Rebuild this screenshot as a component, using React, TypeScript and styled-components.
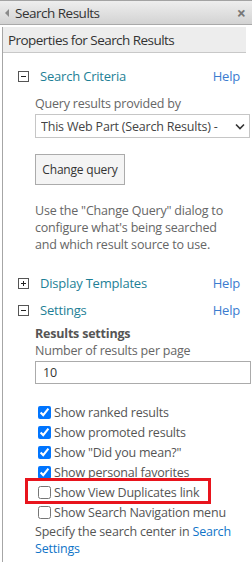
import React from "react";
import styled, { createGlobalStyle } from "styled-components";

const GlobalStyle = createGlobalStyle`
  body {
    margin: 0;
    background: #fff;
    font-family: "Open Sans", "Noto Sans", sans-serif;
    color: #444;
  }
`;

const FONT = `"Open Sans", "Noto Sans", sans-serif`;

const TitleBar = styled.div`
  display: flex;
  align-items: center;
  height: 23px;
  border-top: 1px solid #a3a3a3;
  border-bottom: 1px solid #a9a9a9;
  background: linear-gradient(#eeeeee, #d3d3d3);
  padding: 0 6px 0 5px;
  font-family: ${FONT};
  font-size: 13.5px;
  color: #333;
`;

const BackArrow = styled.span`
  width: 0;
  height: 0;
  border-top: 4px solid transparent;
  border-bottom: 4px solid transparent;
  border-right: 4px solid #8a8a8a;
  margin-right: 6px;
`;

const TitleText = styled.span`
  flex: 1;
  letter-spacing: -0.5px;
`;

const CloseIcon = styled.span`
  font-size: 16px;
  font-weight: bold;
  color: #777;
  line-height: 1;
`;

const Panel = styled.div`
  margin: 2px 0 0 2px;
  border-left: 1px solid #a6a6a6;
  min-height: 537px;
  box-sizing: border-box;
`;

const PropertiesBar = styled.div`
  width: 243px;
  height: 26px;
  display: flex;
  align-items: center;
  padding-left: 5px;
  box-sizing: border-box;
  background: #ededed;
  border-bottom: 1px solid #c8c8c8;
  font-size: 13.5px;
  color: #333;
  letter-spacing: -0.55px;
`;

const Body = styled.div`
  padding: 14px 12px 0 15px;
  font-size: 12.5px;
  letter-spacing: -0.2px;
`;

const SectionHead = styled.div<{ gap?: number }>`
  display: flex;
  align-items: center;
  height: 18px;
  margin-top: ${({ gap }) => gap ?? 0}px;
`;

const Toggle = styled.span`
  width: 9px;
  height: 9px;
  border: 1px solid #555;
  position: relative;
  margin-right: 11px;
  &::before {
    content: "";
    position: absolute;
    left: 2px;
    top: 4px;
    width: 5px;
    height: 1px;
    background: #222;
  }
`;

const ToggleOpen = styled(Toggle)`
  &::after {
    content: "";
    position: absolute;
    left: 4px;
    top: 2px;
    width: 1px;
    height: 5px;
    background: #222;
  }
`;

const SectionTitle = styled.span`
  flex: 1;
  font-size: 13px;
  color: #1e7f96;
`;

const Help = styled.a`
  font-size: 13px;
  color: #3b7ccf;
  text-decoration: none;
`;

const Content = styled.div`
  padding-left: 17px;
`;

const Label = styled.div<{ top?: number }>`
  color: #666;
  line-height: 17px;
  margin-top: ${({ top }) => top ?? 0}px;
`;

const Strong = styled.div`
  font-weight: bold;
  color: #555;
  line-height: 17px;
  margin-top: 6px;
`;

const Select = styled.div`
  display: flex;
  align-items: center;
  height: 22px;
  width: 204px;
  margin-top: 2px;
  padding: 0 4px 0 5px;
  border: 1px solid #c6c6c6;
  color: #444;
  white-space: nowrap;
  overflow: hidden;
  box-sizing: content-box;
`;

const SelectText = styled.span`
  flex: 1;
  overflow: hidden;
`;

const Button = styled.div`
  width: 88px;
  height: 29px;
  margin-top: 16px;
  display: flex;
  align-items: center;
  justify-content: center;
  border: 1px solid #ababab;
  background: #f4f4f4;
  color: #333;
  font-size: 12px;
`;

const Input = styled.div`
  height: 21px;
  width: 207px;
  margin-top: 2px;
  padding-left: 7px;
  border: 1px solid #ababab;
  display: flex;
  align-items: center;
  color: #333;
`;

const CheckList = styled.div`
  margin-top: 18px;
  display: flex;
  flex-direction: column;
`;

const CheckRow = styled.label<{ marked?: boolean }>`
  position: relative;
  display: flex;
  align-items: center;
  height: 20px;
  padding-left: 3px;
  color: #555;
  input {
    margin: 0 3px 0 0;
    width: 13px;
    height: 13px;
    accent-color: #0075ff;
  }
  &::after {
    content: "";
    display: ${({ marked }) => (marked ? "block" : "none")};
    position: absolute;
    left: -10px;
    top: -4px;
    width: 180px;
    height: 20px;
    border: 3px solid #e8141d;
  }
`;

const Foot = styled.div`
  color: #555;
  line-height: 17px;
  margin-top: 1px;
  a {
    color: #0f74c8;
    text-decoration: none;
  }
`;

const checks = [
  { label: "Show ranked results", on: true },
  { label: "Show promoted results", on: true },
  { label: 'Show "Did you mean?"', on: true },
  { label: "Show personal favorites", on: true },
  { label: "Show View Duplicates link", on: false, marked: true },
  { label: "Show Search Navigation menu", on: false },
];

export default function App() {
  return (
    <>
      <GlobalStyle />
      <TitleBar>
        <BackArrow />
        <TitleText>Search Results</TitleText>
        <CloseIcon>×</CloseIcon>
      </TitleBar>
      <Panel>
        <PropertiesBar>Properties for Search Results</PropertiesBar>
        <Body>
          <SectionHead>
            <Toggle />
            <SectionTitle>Search Criteria</SectionTitle>
            <Help href="#">Help</Help>
          </SectionHead>
          <Content>
            <Label top={10}>Query results provided by</Label>
            <Select>
              <SelectText>This Web Part (Search Results) -</SelectText>
              <svg width="10" height="7" viewBox="0 0 10 7">
                <path d="M1 1.5 L5 5.5 L9 1.5" fill="none" stroke="#333" strokeWidth="1.6" />
              </svg>
            </Select>
            <Button>Change query</Button>
            <Label top={17}>
              Use the "Change Query" dialog to configure what's being searched and which result source to use.
            </Label>
          </Content>
          <SectionHead gap={21}>
            <ToggleOpen />
            <SectionTitle>Display Templates</SectionTitle>
            <Help href="#">Help</Help>
          </SectionHead>
          <SectionHead gap={9}>
            <Toggle />
            <SectionTitle>Settings</SectionTitle>
            <Help href="#">Help</Help>
          </SectionHead>
          <Content>
            <Strong>Results settings</Strong>
            <Label>Number of results per page</Label>
            <Input>10</Input>
            <CheckList>
              {checks.map((c) => (
                <CheckRow key={c.label} marked={c.marked}>
                  <input type="checkbox" defaultChecked={c.on} />
                  {c.label}
                </CheckRow>
              ))}
            </CheckList>
            <Foot>
              Specify the search center in <a href="#">Search</a>
              <br />
              <a href="#">Settings</a>
            </Foot>
          </Content>
        </Body>
      </Panel>
    </>
  );
}
